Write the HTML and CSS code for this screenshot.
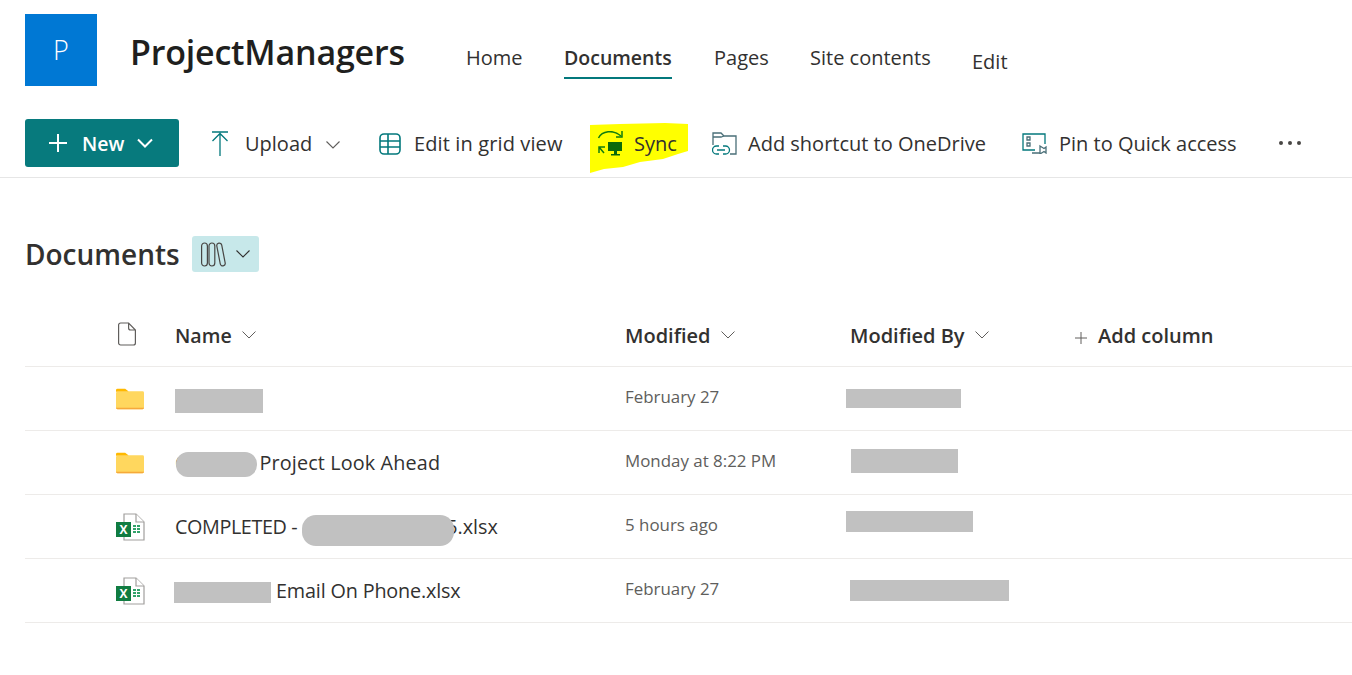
FILE: index.html
```html
<!DOCTYPE html>
<html lang="en">
<head>
  <meta charset="UTF-8" />
  <title>ProjectManagers - Documents</title>
  <link rel="stylesheet" href="styles.css">
</head>
<body>
  <header class="site-header">
    <div class="site-logo">P</div>
    <h1 class="site-title">ProjectManagers</h1>
    <nav class="site-nav">
      <a class="nav-link nav-home">Home</a>
      <a class="nav-link nav-docs active">Documents</a>
      <a class="nav-link nav-pages">Pages</a>
      <a class="nav-link nav-contents">Site contents</a>
      <a class="nav-link nav-edit">Edit</a>
    </nav>
  </header>

  <div class="command-bar">
    <button class="new-btn">
      <svg width="18" height="18" viewBox="0 0 18 18"><path d="M9 0v18M0 9h18" stroke="#fff" stroke-width="2"/></svg>
      <span>New</span>
      <svg width="16" height="10" viewBox="0 0 16 10"><path d="M1 1.500l7 7 7-7" fill="none" stroke="#fff" stroke-width="2"/></svg>
    </button>

    <div class="cmd cmd-upload">
      <svg class="cmd-icon" width="18" height="25" viewBox="0 0 18 25"><path d="M1 1h16M9 25V2.500M1.500 10L9 2.500 16.500 10" fill="none" stroke="#03787c" stroke-width="1.300"/></svg>
      <span>Upload</span>
      <svg class="chev" width="14" height="8" viewBox="0 0 14 8"><path d="M.5.5l6.500 6.500 6.500-6.500" fill="none" stroke="#605e5c" stroke-width="1.100"/></svg>
    </div>

    <div class="cmd cmd-grid">
      <svg class="cmd-icon" width="22" height="22" viewBox="0 0 22 22"><rect x="1" y="1" width="20" height="20" rx="4" fill="none" stroke="#03787c" stroke-width="1.600"/><path d="M1 8h20M1 14h20M9 1v20" stroke="#03787c" stroke-width="1.600"/></svg>
      <span>Edit in grid view</span>
    </div>

    <div class="cmd cmd-sync">
      <svg class="sync-mark" width="98" height="52" viewBox="0 0 98 52"><path d="M0 2L30 1 75 0 98 1 98 28 88 31 73 36 50 39 33 44 14 46 0 50z" fill="#ffff00"/></svg>
      <svg class="cmd-icon" width="26" height="26" viewBox="0 0 26 26"><g fill="none" stroke="#107c10" stroke-width="1.500"><path d="M1.500 7C5 0 16-2 24 5"/><path d="M25 0v6h-6"/><path d="M2 16l5 6M2 22v-6h6"/></g><path d="M11 11h14v9h-5v3h3v1.500h-9V23h3v-3h-6z" fill="#0b6a0b"/></svg>
      <span>Sync</span>
    </div>

    <div class="cmd cmd-shortcut">
      <svg class="cmd-icon" width="26" height="26" viewBox="0 0 26 26"><g fill="none" stroke="#4a6f78" stroke-width="1.300"><path d="M1 14V2h8l3 3h12v18h-6"/><path d="M1 6h8l3-1"/><path d="M7 15H4.500a3.500 3.500 0 0 0 0 8H7M11 15h2.500a3.500 3.500 0 0 1 0 8H11M5 19h8" stroke="#03787c"/></g></svg>
      <span>Add shortcut to OneDrive</span>
    </div>

    <div class="cmd cmd-pin">
      <svg class="cmd-icon" width="25" height="21" viewBox="0 0 25 21"><g fill="none" stroke="#03787c" stroke-width="1.300"><path d="M13 17H1V1h22v10"/><path d="M5 4h3v3H5zM5 10h3v3H5z" stroke="#4a6f78"/><path d="M10 20h8M18 13l4 2.500 2-1.500v6l-2-1.500-4 2.500z" stroke="#4a6f78"/></g></svg>
      <span>Pin to Quick access</span>
    </div>

    <div class="more">
      <i></i><i></i><i></i>
    </div>
  </div>

  <main class="library">
    <div class="library-head">
      <h2>Documents</h2>
      <div class="view-btn">
        <svg width="27" height="25" viewBox="0 0 27 25"><g fill="none" stroke="#484644" stroke-width="1.200"><rect x=".6" y="1" width="5.800" height="23" rx="2.900"/><rect x="8" y="1" width="5.800" height="23" rx="2.900"/><rect x="-2.500" y="-11.500" width="5" height="23" rx="2.500" transform="translate(20 12.500) rotate(-11)"/></g></svg>
        <svg width="14" height="8" viewBox="0 0 14 8"><path d="M.5.5l6.500 6.500 6.500-6.500" fill="none" stroke="#323130" stroke-width="1.100"/></svg>
      </div>
    </div>

    <div class="row row-head">
      <div class="cell-icon cell-doc">
        <svg width="18" height="24" viewBox="0 0 18 24"><path d="M.6 3a2 2 0 0 1 2-2h8l6.800 7v13a2 2 0 0 1-2 2H2.600a2 2 0 0 1-2-2z M10.600 1v5a2 2 0 0 0 2 2h4.800" fill="none" stroke="#605e5c" stroke-width="1.200"/></svg>
      </div>
      <div class="col-name">Name <svg class="chev" width="14" height="8" viewBox="0 0 14 8"><path d="M.5.5l6.500 6.500 6.500-6.500" fill="none" stroke="#605e5c" stroke-width="1"/></svg></div>
      <div class="col-mod">Modified <svg class="chev" width="14" height="8" viewBox="0 0 14 8"><path d="M.5.5l6.500 6.500 6.500-6.500" fill="none" stroke="#605e5c" stroke-width="1"/></svg></div>
      <div class="col-by">Modified By <svg class="chev" width="14" height="8" viewBox="0 0 14 8"><path d="M.5.5l6.500 6.500 6.500-6.500" fill="none" stroke="#605e5c" stroke-width="1"/></svg></div>
      <div class="col-add"><svg class="plus" width="12" height="12" viewBox="0 0 12 12"><path d="M6 0v12M0 6h12" stroke="#605e5c" stroke-width="1"/></svg>Add column</div>
    </div>

    <div class="row">
      <div class="cell-icon">
        <svg width="28" height="22" viewBox="0 0 29 22"><path d="M0 2a1.500 1.500 0 0 1 1.500-1.500h8l4 3H0z" fill="#ffb900"/><path d="M0 5a1.500 1.500 0 0 1 1.500-1.500h10L14 3h13.500A1.500 1.500 0 0 1 29 4.500V20a1.500 1.500 0 0 1-1.500 1.500h-26A1.500 1.500 0 0 1 0 20z" fill="#ffd75e"/><path d="M0 20h29a1.500 1.500 0 0 1-1.500 1.500h-26A1.500 1.500 0 0 1 0 20z" fill="#f6a93b"/></svg>
      </div>
      <div class="name-text"><span class="hint">C</span><span class="patch patch-a"></span></div>
      <div class="date-text">February 27</div>
      <div><span class="patch patch-by patch-by1"></span></div>
    </div>

    <div class="row">
      <div class="cell-icon">
        <svg width="28" height="22" viewBox="0 0 29 22"><path d="M0 2a1.500 1.500 0 0 1 1.500-1.500h8l4 3H0z" fill="#ffb900"/><path d="M0 5a1.500 1.500 0 0 1 1.500-1.500h10L14 3h13.500A1.500 1.500 0 0 1 29 4.500V20a1.500 1.500 0 0 1-1.500 1.500h-26A1.500 1.500 0 0 1 0 20z" fill="#ffd75e"/><path d="M0 20h29a1.500 1.500 0 0 1-1.500 1.500h-26A1.500 1.500 0 0 1 0 20z" fill="#f6a93b"/></svg>
      </div>
      <div class="name-text"><span class="hint">C</span><span class="patch patch-b"></span><span class="after-b">Project Look Ahead</span></div>
      <div class="date-text">Monday at 8:22 PM</div>
      <div><span class="patch patch-by patch-by2"></span></div>
    </div>

    <div class="row">
      <div class="cell-icon">
        <svg width="29" height="28" viewBox="0 0 29 28"><path d="M8 1h12l8 8v18H8z" fill="#fff" stroke="#a19f9d" stroke-width="1.200"/><path d="M20 1v8h8" fill="#fff" stroke="#a19f9d" stroke-width="1.200"/><path d="M17 12h3v2h-3zM21 12h3v2h-3zM17 15h3v2h-3zM21 15h3v2h-3zM17 18h3v2h-3zM21 18h3v2h-3z" fill="#33a36b"/><rect x="0" y="9" width="15" height="15" fill="#107c41"/><text class="xl" x="7.500" y="21">X</text></svg>
      </div>
      <div class="name-text"><span class="caps">COMPLETED -</span><span class="patch patch-c"></span><span class="after-c">5.xlsx</span></div>
      <div class="date-text">5 hours ago</div>
      <div><span class="patch patch-by patch-by3"></span></div>
    </div>

    <div class="row">
      <div class="cell-icon">
        <svg width="29" height="28" viewBox="0 0 29 28"><path d="M8 1h12l8 8v18H8z" fill="#fff" stroke="#a19f9d" stroke-width="1.200"/><path d="M20 1v8h8" fill="#fff" stroke="#a19f9d" stroke-width="1.200"/><path d="M17 12h3v2h-3zM21 12h3v2h-3zM17 15h3v2h-3zM21 15h3v2h-3zM17 18h3v2h-3zM21 18h3v2h-3z" fill="#33a36b"/><rect x="0" y="9" width="15" height="15" fill="#107c41"/><text class="xl" x="7.500" y="21">X</text></svg>
      </div>
      <div class="name-text"><span class="patch patch-d"></span><span class="after-d">Email On Phone.xlsx</span></div>
      <div class="date-text">February 27</div>
      <div><span class="patch patch-by patch-by4"></span></div>
    </div>
  </main>
</body>
</html>
```

FILE: styles.css
```css
* {
  margin: 0;
  padding: 0;
  box-sizing: border-box;
}
body {
  font-family: 'Open Sans', 'Noto Sans', sans-serif;
  color: #323130;
  background: #fff;
  overflow: hidden;
}

/* header */
.site-header {
  display: flex;
  align-items: flex-start;
  height: 119px;
  padding: 14px 0 0 25px;
}
.site-logo {
  width: 72px;
  height: 72px;
  background: #0078d4;
  color: #fff;
  font-size: 27px;
  font-weight: 300;
  line-height: 72px;
  text-align: center;
}
.site-title {
  margin: 14px 0 0 33px;
  font-size: 34px;
  line-height: 48px;
  font-weight: 600;
  letter-spacing: -0.2px;
  color: #201f1e;
  width: 336px;
}
.site-nav {
  display: flex;
  margin-top: 30px;
  font-size: 20px;
}
.nav-link {
  display: block;
  height: 35px;
  line-height: 28px;
  white-space: nowrap;
}
.nav-home { width: 98px; }
.nav-docs { width: 108px; margin-right: 42px; font-size: 19.5px; }
.nav-pages { width: 96px; }
.nav-contents { width: 162px; }
.nav-edit { margin-top: 4px; }
.active {
  font-weight: 600;
  border-bottom: 2px solid #03787c;
}

/* commands */
.command-bar {
  display: flex;
  align-items: center;
  height: 59px;
  padding: 0 0 11px 25px;
  border-bottom: 1px solid #e6e6e6;
  font-size: 20px;
  white-space: nowrap;
}
.new-btn {
  display: flex;
  align-items: center;
  width: 154px;
  height: 48px;
  padding-left: 24px;
  background: #077a7d;
  border: none;
  border-radius: 3px;
  color: #fff;
  font: 600 19.5px 'Open Sans', sans-serif;
  margin-right: 31px;
}
.new-btn span { margin: 1px 13px 0 15px; }
.cmd {
  position: relative;
  display: flex;
  align-items: center;
  margin-top: 2px;
}
.cmd span { position: relative; }
.cmd-icon { position: relative; flex: none; }
.cmd-upload { width: 169px; gap: 16px; padding-left: 1px; }
.cmd-upload .chev { margin-left: -2px; margin-top: 2px; }
.cmd-grid { width: 218px; gap: 13px; letter-spacing: 0.12px; }
.cmd-sync { width: 115px; gap: 11px; }
.cmd-shortcut { width: 310px; gap: 10px; }
.cmd-pin { width: 257px; gap: 12px; }
.sync-mark {
  position: absolute;
  left: -7px;
  top: -7px;
}
.more {
  display: flex;
  gap: 5px;
}
.more i {
  width: 4px;
  height: 4px;
  border-radius: 50%;
  background: #484644;
}

/* library */
.library { padding-left: 25px; }
.library-head {
  display: flex;
  align-items: center;
  height: 130px;
  padding-top: 22px;
  gap: 12px;
}
.library-head h2 {
  font-size: 28px;
  font-weight: 600;
}
.view-btn {
  display: flex;
  align-items: center;
  gap: 8px;
  width: 67px;
  height: 36px;
  padding-left: 9px;
  background: #c7e8ea;
  border-radius: 3px;
}
.row {
  display: grid;
  grid-template-columns: 150px 450px 225px 1fr;
  align-items: center;
  height: 64px;
  border-bottom: 1px solid #edebe9;
}
.row-head {
  grid-template-columns: 150px 450px 225px 225px 1fr;
  height: 59px;
  padding-bottom: 3px;
  font-size: 20px;
  font-weight: 600;
}
.row-head .chev { margin-left: 5px; vertical-align: 4px; }
.col-name { font-size: 19.6px; }
.plus { margin-right: 11px; vertical-align: -1px; }
.cell-icon {
  padding-left: 91px;
  display: flex;
  align-items: center;
}
.cell-doc { padding-left: 93px; margin-top: -3px; }
.name-text {
  font-size: 19.8px;
  line-height: 64px;
  white-space: nowrap;
}
.date-text {
  font-size: 16.9px;
  color: #605e5c;
  margin-top: -5px;
}
.hint { color: #484644; }
.caps { letter-spacing: -0.4px; }
.xl {
  font: 700 12px 'Open Sans', sans-serif;
  fill: #fff;
  text-anchor: middle;
}

/* grey blocks over the hidden names */
.patch {
  display: inline-block;
  position: relative;
  background: #c1c1c1;
  vertical-align: middle;
}
.patch-a { width: 88px; height: 24px; margin-left: -12px; }
.patch-b { width: 81px; height: 25px; margin-left: -11px; border-radius: 12px; }
.patch-c { width: 152px; height: 31px; margin-left: 5px; border-radius: 14px; top: 2px; z-index: 1; }
.patch-d { width: 97px; height: 21px; margin-left: -1px; }
.after-b { margin-left: 2px; letter-spacing: 0.14px; }
.after-c { margin-left: -8px; }
.after-d { margin-left: 5px; letter-spacing: -0.16px; }
.patch-by { display: block; }
.patch-by1 { width: 115px; height: 19px; margin-left: -4px; top: -1px; }
.patch-by2 { width: 107px; height: 24px; margin-left: 1px; top: -2px; }
.patch-by3 { width: 127px; height: 21px; margin-left: -4px; top: -6px; }
.patch-by4 { width: 159px; height: 21px; top: -1px; }
```
